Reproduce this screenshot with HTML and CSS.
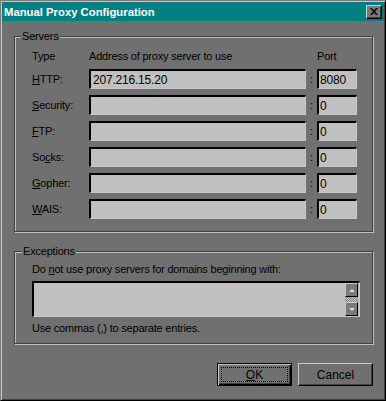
FILE: index.html
```html
<!DOCTYPE html>
<html lang="en">
<head>
	<meta charset="UTF-8">
	<title>Manual Proxy Configuration</title>
	<link rel="stylesheet" href="styles.css">
</head>
<body>
	<div class="window">
		<div class="titlebar">
			<span class="title">Manual Proxy Configuration</span>
			<span class="close">
				<svg width="8" height="7" viewBox="0 0 8 7"><path d="M0 0h2l2 2.5L6 0h2L5 3.5 8 7H6L4 4.5 2 7H0l3-3.5z" fill="#000"/></svg>
			</span>
		</div>
		<div class="content">
			<div class="group servers">
				<span class="legend">Servers</span>
				<div class="grid">
					<span class="head">Type</span>
					<span class="head">Address of proxy server to use</span>
					<span></span>
					<span class="head">Port</span>

					<span class="lbl"><u>H</u>TTP:</span>
					<div class="field">207.216.15.20</div>
					<span class="colon">:</span>
					<div class="field port">8080</div>

					<span class="lbl"><u>S</u>ecurity:</span>
					<div class="field"></div>
					<span class="colon">:</span>
					<div class="field port">0</div>

					<span class="lbl"><u>F</u>TP:</span>
					<div class="field"></div>
					<span class="colon">:</span>
					<div class="field port">0</div>

					<span class="lbl">So<u>c</u>ks:</span>
					<div class="field"></div>
					<span class="colon">:</span>
					<div class="field port">0</div>

					<span class="lbl"><u>G</u>opher:</span>
					<div class="field"></div>
					<span class="colon">:</span>
					<div class="field port">0</div>

					<span class="lbl"><u>W</u>AIS:</span>
					<div class="field"></div>
					<span class="colon">:</span>
					<div class="field port">0</div>
				</div>
			</div>

			<div class="group exceptions">
				<span class="legend">Exceptions</span>
				<p class="note">Do <u>n</u>ot use proxy servers for domains beginning with:</p>
				<div class="area">
					<div class="scroll">
						<span class="sbtn"><i class="arr up"></i></span>
						<span class="track"></span>
						<span class="sbtn"><i class="arr down"></i></span>
					</div>
				</div>
				<p class="note hint">Use commas (,) to separate entries.</p>
			</div>

			<div class="buttons">
				<div class="btn default"><span class="focus"><u>O</u>K</span></div>
				<div class="btn">Cancel</div>
			</div>
		</div>
	</div>
</body>
</html>
```

FILE: styles.css
```css
*{
	margin:0;padding:0;
	box-sizing:border-box;
}
html,body{
	width:386px;
	height:401px;
	overflow:hidden;
	background:#707070;
}
body{
	font-family:"Liberation Sans",Arial,sans-serif;
	font-size:11px;
	letter-spacing:-0.2px;
	color:#000;
}
u{text-decoration:underline;text-underline-offset:1px;}

.window{
	width:386px;
	height:401px;
	padding:1px;
	border:1px solid;
	border-color:#7a7a7a #000 #000 #7a7a7a;
	box-shadow:inset 1px 1px 0 #c8c8c8,inset -1px -1px 0 #404040;
}
.titlebar{
	height:19px;
	background:#008080;
	display:flex;
	align-items:center;
	justify-content:space-between;
	padding:0 2px 0 2px;
}
.title{
	color:#fff;
	font-weight:bold;
	letter-spacing:0;
	font-size:11.3px;
}
.close{
	width:16px;
	height:14px;
	background:#7a7a7a;
	border:1px solid;
	border-color:#d0d0d0 #000 #000 #d0d0d0;
	box-shadow:inset -1px -1px 0 #404040;
	display:flex;
	align-items:center;
	justify-content:center;
	padding-bottom:1px;
}
.close svg{display:block;}

.content{
	padding:15px 11px 0 12px;
}
.group{
	position:relative;
	border:1px solid #404040;
	box-shadow:inset 1px 1px 0 #c0c0c0,1px 1px 0 #c0c0c0;
}
.legend{
	position:absolute;
	top:-7px;
	left:6px;
	padding:0 1px;
	line-height:13px;
	background:#707070;
}
.exceptions .legend{left:7px;}

.servers{
	height:196px;
	padding:12px 0 0 17px;
}
.grid{
	display:grid;
	grid-template-columns:57px 217px 11px 40px;
	grid-template-rows:14px;
	grid-auto-rows:20px;
	row-gap:6px;
	align-items:center;
}
.head,.lbl{line-height:14px;}
.colon{text-align:center;}
.field{
	height:20px;
	background:#c0c0c0;
	border-style:solid;
	border-width:2px 1px 1px 2px;
	border-color:#000 #c8c8c8 #c8c8c8 #000;
	padding:2px 0 0 2px;
	line-height:14px;
	font-size:12px;
}
.field.port{padding-left:1px;}

.exceptions{
	margin-top:19px;
	height:93px;
	padding:11px 0 0 17px;
}
.note{line-height:13px;}
.area{
	position:relative;
	margin-top:5px;
	width:328px;
	height:36px;
	background:#c0c0c0;
	border-style:solid;
	border-width:2px 1px 1px 2px;
	border-color:#000 #c8c8c8 #c8c8c8 #000;
}
.scroll{
	position:absolute;
	right:1px;
	top:0;
	bottom:0;
	width:13px;
	display:flex;
	flex-direction:column;
}
.sbtn{
	height:14px;
	background:#7a7a7a;
	border:1px solid;
	border-color:#c8c8c8 #000 #000 #c8c8c8;
	display:flex;
	align-items:center;
	justify-content:center;
}
.track{
	flex:1;
	background:repeating-conic-gradient(#c8c8c8 0 25%,#808080 0 50%) 0 0/2px 2px;
}
.arr{
	width:0;height:0;
	border-left:3px solid transparent;
	border-right:3px solid transparent;
}
.arr.up{border-bottom:3px solid #e0e0e0;}
.arr.down{border-top:3px solid #e0e0e0;}
.hint{margin-top:5px;}

.buttons{
	margin-top:19px;
	display:flex;
	justify-content:flex-end;
	gap:6px;
	padding-right:0;
}
.btn{
	width:75px;
	height:23px;
	border:1px solid;
	border-color:#c8c8c8 #000 #000 #c8c8c8;
	box-shadow:inset -1px -1px 0 #404040;
	display:flex;
	align-items:center;
	justify-content:center;
	font-size:12px;
	letter-spacing:0;
}
.btn.default{
	border:1px solid #000;
	box-shadow:inset 1px 1px 0 #c8c8c8,inset -1px -1px 0 #000,inset -2px -2px 0 #404040;
	padding:3px;
}
.focus{
	flex:1;
	align-self:stretch;
	border:1px dotted #000;
	display:flex;
	align-items:center;
	justify-content:center;
}
```
